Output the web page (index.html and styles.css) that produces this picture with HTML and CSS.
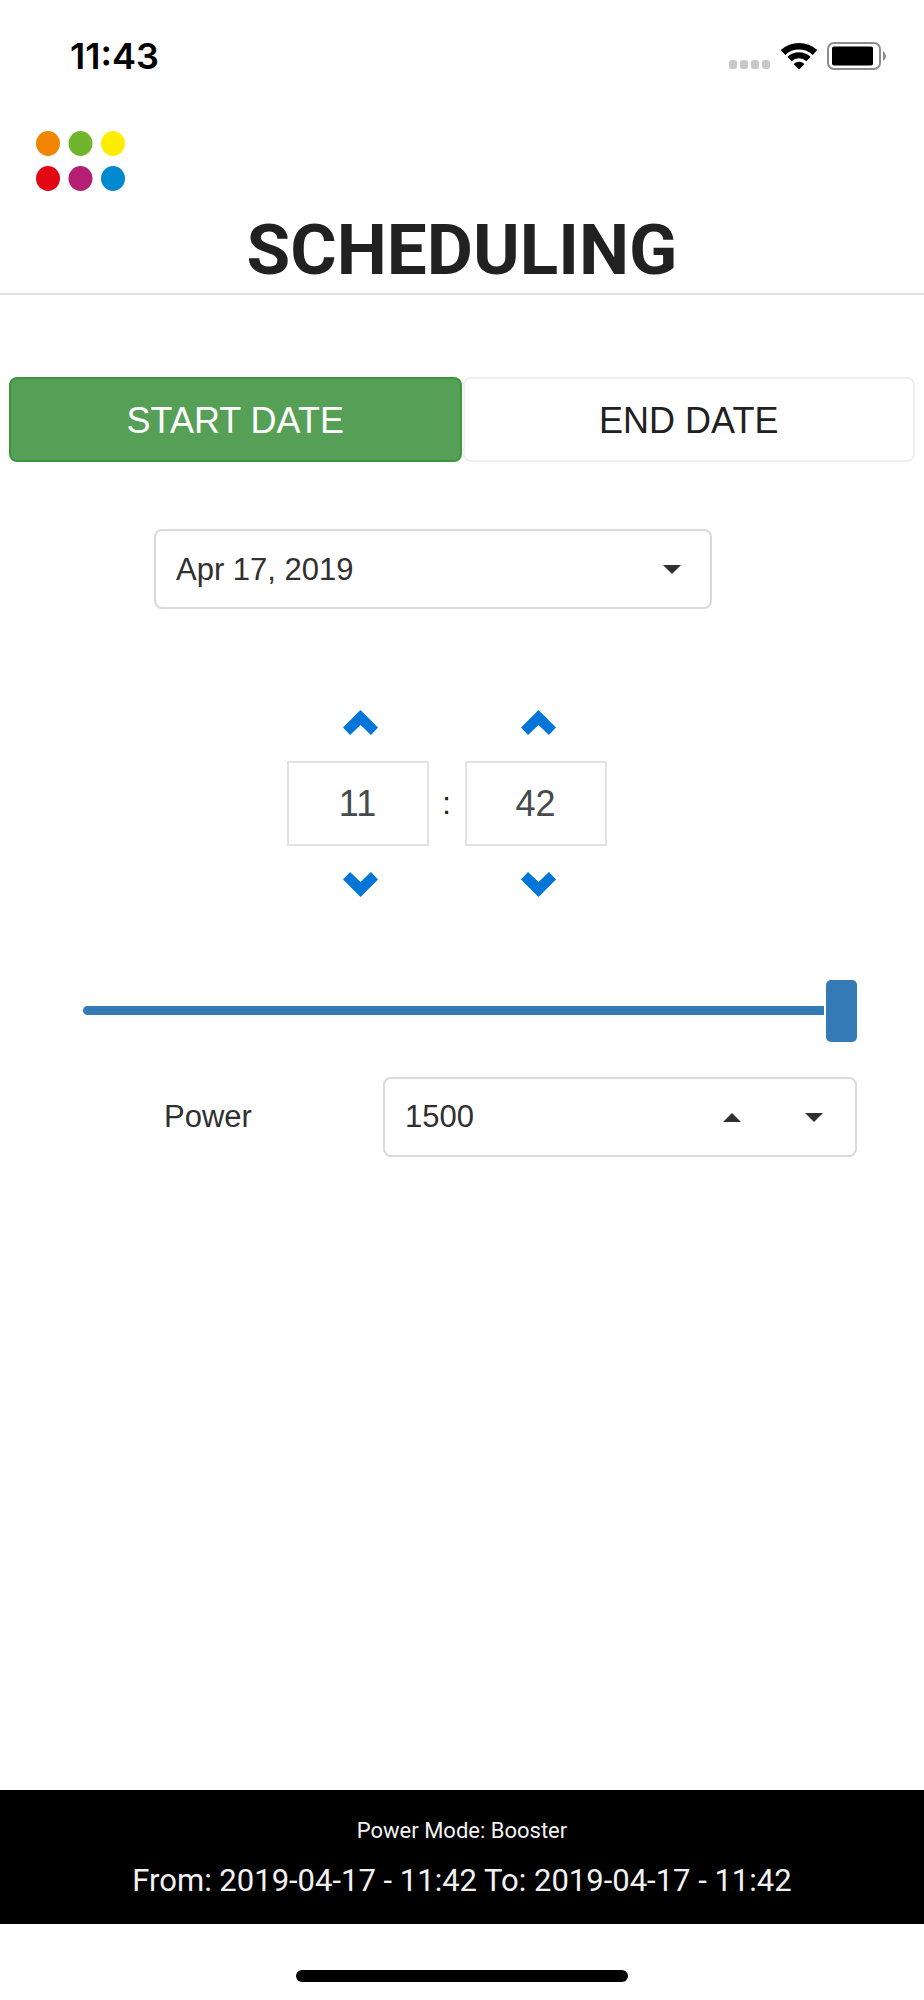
FILE: index.html
```html
<!DOCTYPE html>
<html lang="en">
<head>
    <meta charset="UTF-8">
    <meta name="viewport" content="width=device-width, initial-scale=1.0">
    <title>Scheduling</title>
    <link rel="stylesheet" href="styles.css">
</head>
<body>
    <div class="status-bar">
        <span class="clock">11:43</span>
        <div class="status-icons">
            <svg width="42" height="9" viewBox="0 0 42 9" fill="#c8c8c8">
                <rect x="0" y="0" width="8" height="9" rx="3"/>
                <rect x="11" y="0" width="8" height="9" rx="3"/>
                <rect x="22" y="0" width="8" height="9" rx="3"/>
                <rect x="33" y="0" width="8" height="9" rx="3"/>
            </svg>
            <svg width="38" height="28" viewBox="0 0 38 28" fill="none" stroke="#000">
                <path d="M3 10.500 A23.500 23.500 0 0 1 35 10.500" stroke-width="6.500"/>
                <path d="M9.500 17 A14 14 0 0 1 28.500 17" stroke-width="6"/>
                <path d="M13.500 22 Q19 17.500 24.500 22 L19 27.500 Z" fill="#000" stroke="none"/>
            </svg>
            <svg width="60" height="28" viewBox="0 0 60 28">
                <rect x="1" y="1" width="52" height="26" rx="6" fill="#fff" stroke="#8c8c8c" stroke-width="2"/>
                <rect x="5" y="4.500" width="41" height="19" rx="2" fill="#000"/>
                <path d="M56 9 Q59 11 59 14 Q59 17 56 19 Z" fill="#8c8c8c"/>
            </svg>
        </div>
    </div>

    <header class="header">
        <svg class="logo" width="90" height="60" viewBox="0 0 90 60">
            <ellipse cx="12" cy="12.500" rx="12" ry="12.500" fill="#f28500"/>
            <ellipse cx="44.500" cy="12.500" rx="12" ry="12.500" fill="#70b62c"/>
            <ellipse cx="77" cy="12.500" rx="12" ry="12.500" fill="#ffed00"/>
            <ellipse cx="12" cy="47.500" rx="12" ry="12.500" fill="#e30613"/>
            <ellipse cx="44.500" cy="47.500" rx="12" ry="12.500" fill="#b41f74"/>
            <ellipse cx="77" cy="47.500" rx="12" ry="12.500" fill="#0089cf"/>
        </svg>
        <h1>SCHEDULING</h1>
    </header>

    <main class="content">
        <div class="tabs">
            <button type="button" class="tab active">START DATE</button>
            <button type="button" class="tab">END DATE</button>
        </div>

        <select class="date-select" aria-label="Date">
            <option>Apr 17, 2019</option>
        </select>

        <div class="time-picker">
            <div class="time-unit">
                <button type="button" class="arrow" aria-label="Hour up">
                    <svg width="35" height="25" viewBox="0 0 35 25"><path d="M17.500 0 L35 17.500 L28 25 L17.500 15 L7 25 L0 17.500 Z"/></svg>
                </button>
                <input type="text" value="11" aria-label="Hour">
                <button type="button" class="arrow" aria-label="Hour down">
                    <svg width="35" height="25" viewBox="0 0 35 25"><path d="M17.500 25 L35 7.500 L28 0 L17.500 10 L7 0 L0 7.500 Z"/></svg>
                </button>
            </div>
            <span class="colon">:</span>
            <div class="time-unit">
                <button type="button" class="arrow" aria-label="Minute up">
                    <svg width="35" height="25" viewBox="0 0 35 25"><path d="M17.500 0 L35 17.500 L28 25 L17.500 15 L7 25 L0 17.500 Z"/></svg>
                </button>
                <input type="text" value="42" aria-label="Minute">
                <button type="button" class="arrow" aria-label="Minute down">
                    <svg width="35" height="25" viewBox="0 0 35 25"><path d="M17.500 25 L35 7.500 L28 0 L17.500 10 L7 0 L0 7.500 Z"/></svg>
                </button>
            </div>
        </div>

        <input type="range" class="slider" min="0" max="1500" value="1500" aria-label="Power level">

        <div class="power-row">
            <label for="power">Power</label>
            <div class="number-box">
                <input type="text" id="power" value="1500">
                <button type="button" aria-label="Increase power">
                    <svg width="18" height="9" viewBox="0 0 18 9"><path d="M0 9 L9 0 L18 9 Z"/></svg>
                </button>
                <button type="button" aria-label="Decrease power">
                    <svg width="18" height="9" viewBox="0 0 18 9"><path d="M0 0 L9 9 L18 0 Z"/></svg>
                </button>
            </div>
        </div>
    </main>

    <footer class="footer">
        <p class="mode">Power Mode: Booster</p>
        <p class="range">From: 2019-04-17 - 11:42 To: 2019-04-17 - 11:42</p>
    </footer>
    <div class="home-area">
        <div class="home-bar"></div>
    </div>
</body>
</html>
```
FILE: styles.css
```css
* {
    box-sizing: border-box;
}
body {
    margin: 0;
    min-height: 100vh;
    display: flex;
    flex-direction: column;
    background-color: #fff;
    color: #303030;
    font-family: "Liberation Sans", Arial, sans-serif;
    font-size: 31px;
}
button, input, select {
    font-family: inherit;
    color: inherit;
    margin: 0;
    padding: 0;
    border: none;
    background: none;
}
svg {
    display: block;
}

/* status bar */
.status-bar {
    display: flex;
    justify-content: space-between;
    align-items: center;
    height: 112px;
    padding: 0 37px 0 70px;
}
.clock {
    font-family: Inter, sans-serif;
    font-size: 36px;
    font-weight: 600;
    color: #000;
}
.status-icons {
    display: flex;
    align-items: center;
    gap: 9px;
}
.status-icons svg:first-child {
    margin-top: 16px;
}

/* header */
.header {
    padding: 19px 36px 0;
    border-bottom: 2px solid #e0e0e0;
}
.header h1 {
    margin: 16px 0 0;
    font-family: Roboto, sans-serif;
    font-size: 71px;
    font-weight: 700;
    line-height: 86px;
    text-align: center;
    color: #212121;
}

.content {
    flex: 1;
    padding: 82px 9px 0;
}
.tabs {
    display: flex;
    gap: 1px;
}
.tab {
    flex: 1;
    height: 85px;
    padding-top: 2px;
    border: 2px solid #eceeef;
    border-radius: 8px;
    font-size: 36px;
    color: #212121;
}
.tab.active {
    background-color: #569f56;
    border-color: #3b963b;
    color: #fff;
}

.date-select {
    appearance: none;
    display: block;
    width: calc(100% - 348px);
    height: 80px;
    margin: 67px 0 0 145px;
    padding: 0 20px;
    border: 2px solid #dadada;
    border-radius: 8px;
    font-size: 31px;
    background: url("data:image/svg+xml,%3Csvg xmlns='http://www.w3.org/2000/svg' viewBox='0 0 18 9'%3E%3Cpath d='M0 0 L9 9 L18 0 Z' fill='%23303030'/%3E%3C/svg%3E") no-repeat right 29px center / 18px 9px;
}

/* time */
.time-picker {
    display: flex;
    justify-content: center;
    align-items: center;
    margin: 101px 31px 0 0;
}
.time-unit {
    display: flex;
    flex-direction: column;
    align-items: center;
    gap: 26px;
}
.time-unit input {
    width: 142px;
    height: 85px;
    border: 2px solid #e1e2e6;
    font-size: 36px;
    text-align: center;
    color: #464a4c;
}
.arrow {
    padding-left: 5px;
    fill: #0275d8;
}
.colon {
    width: 36px;
    text-align: center;
    color: #212121;
}

/* power */
.slider {
    appearance: none;
    display: block;
    width: calc(100% - 132px);
    height: 62px;
    margin: 82px 0 0 74px;
}
.slider::-webkit-slider-runnable-track {
    height: 9px;
    border-radius: 5px;
    background-color: #337ab7;
}
/* white ring leaves a gap between the track and the thumb */
.slider::-webkit-slider-thumb {
    appearance: none;
    width: 31px;
    height: 62px;
    margin-top: -26px;
    border-radius: 5px;
    background-color: #337ab7;
    box-shadow: 0 0 0 2px #fff;
}
.power-row {
    display: flex;
    align-items: center;
    margin: 36px 58px 0 155px;
}
.power-row label {
    flex: 0 0 219px;
}
.number-box {
    flex: 1;
    min-width: 0;
    display: flex;
    align-items: center;
    height: 80px;
    padding-left: 20px;
    border: 2px solid #dadada;
    border-radius: 8px;
}
.number-box input {
    flex: 1;
    min-width: 0;
    font-size: 31px;
}
.number-box button {
    display: flex;
    justify-content: center;
    align-items: center;
    width: 82px;
    height: 76px;
    fill: #303030;
}

/* footer */
.footer {
    padding: 21px 0 20px;
    background-color: #000;
    color: #f2f2f2;
    font-family: Roboto, sans-serif;
    text-align: center;
}
.footer p {
    margin: 0;
}
.footer .mode {
    font-size: 22px;
    line-height: 40px;
}
.footer .range {
    margin-top: 7px;
    font-size: 31px;
    line-height: 46px;
}
.home-area {
    padding: 46px 0 18px;
}
.home-bar {
    width: 36%;
    height: 12px;
    margin: 0 auto;
    border-radius: 6px;
    background-color: #000;
}
```
